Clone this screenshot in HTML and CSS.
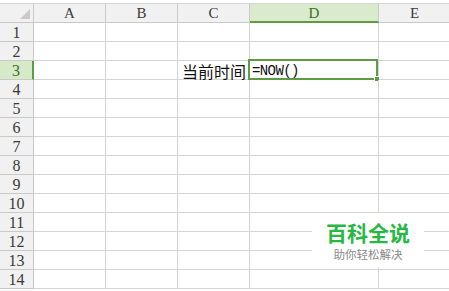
FILE: index.html
```html
<!DOCTYPE html>
<html>
<head>
<meta charset="utf-8">
<link rel="stylesheet" href="styles.css">
</head>
<body>
<div class="sheet">
  <div class="hd corner"><svg class="tri" width="12" height="11" viewBox="0 0 12 11"><polygon points="11,0 11,10 1,10" fill="#c9c9c9"/></svg></div>
  <div class="hd col">A</div>
  <div class="hd col">B</div>
  <div class="hd col">C</div>
  <div class="hd col active-col">D</div>
  <div class="hd col last">E</div>

  <div class="hd row">1</div><div class="c"></div><div class="c"></div><div class="c"></div><div class="c"></div><div class="c last"></div>
  <div class="hd row">2</div><div class="c"></div><div class="c"></div><div class="c"></div><div class="c"></div><div class="c last"></div>
  <div class="hd row active-row">3</div><div class="c"></div><div class="c"></div><div class="c label">当前时间</div><div class="c sel"><span class="formula">=NOW()</span><span class="frame"><span class="handle"></span></span></div><div class="c last"></div>
  <div class="hd row">4</div><div class="c"></div><div class="c"></div><div class="c"></div><div class="c"></div><div class="c last"></div>
  <div class="hd row">5</div><div class="c"></div><div class="c"></div><div class="c"></div><div class="c"></div><div class="c last"></div>
  <div class="hd row">6</div><div class="c"></div><div class="c"></div><div class="c"></div><div class="c"></div><div class="c last"></div>
  <div class="hd row">7</div><div class="c"></div><div class="c"></div><div class="c"></div><div class="c"></div><div class="c last"></div>
  <div class="hd row">8</div><div class="c"></div><div class="c"></div><div class="c"></div><div class="c"></div><div class="c last"></div>
  <div class="hd row">9</div><div class="c"></div><div class="c"></div><div class="c"></div><div class="c"></div><div class="c last"></div>
  <div class="hd row">10</div><div class="c"></div><div class="c"></div><div class="c"></div><div class="c"></div><div class="c last"></div>
  <div class="hd row">11</div><div class="c"></div><div class="c"></div><div class="c"></div><div class="c"></div><div class="c last"></div>
  <div class="hd row">12</div><div class="c"></div><div class="c"></div><div class="c"></div><div class="c"></div><div class="c last"></div>
  <div class="hd row">13</div><div class="c"></div><div class="c"></div><div class="c"></div><div class="c"></div><div class="c last"></div>
  <div class="hd row">14</div><div class="c"></div><div class="c"></div><div class="c"></div><div class="c"></div><div class="c last"></div>
</div>
<div class="watermark">
  <div class="wm-title">百科全说</div>
  <div class="wm-sub">助你轻松解决</div>
</div>
</body>
</html>
```

FILE: styles.css
```css
html, body {
  margin: 0;
  padding: 0;
  background: #ffffff;
  overflow: hidden;
  width: 449px;
  height: 291px;
}

.sheet {
  margin-top: 3px;
  border-top: 1px solid #d6d6d6;
  display: grid;
  grid-template-columns: 34px 72px 72px 72px 129px 72px;
  grid-auto-rows: 19px;
  font-family: "Liberation Serif", "DejaVu Serif", serif;
}

.hd {
  box-sizing: border-box;
  background: #f1f1f1;
  color: #3a3a3a;
  border-right: 1px solid #c9c9c9;
  border-bottom: 1px solid #c9c9c9;
  display: flex;
  align-items: center;
  justify-content: center;
  font-size: 15px;
}

.corner {
  position: relative;
  justify-content: flex-end;
  align-items: flex-end;
  padding: 0 2px 2px 0;
}

.col {
  padding-top: 1px;
}

.row {
  font-size: 16px;
  padding-top: 1px;
}

.active-col {
  background: #d9ebcc;
  border-bottom: 2px solid #5d9b45;
  color: #3d6e2a;
}

.active-row {
  background: #d6e9c9;
  border-right: 2px solid #5d9b45;
  color: #3d6e2a;
}

.c {
  box-sizing: border-box;
  border-right: 1px solid #d4d4d4;
  border-bottom: 1px solid #d4d4d4;
  position: relative;
  display: flex;
  align-items: center;
}

.label {
  justify-content: flex-end;
  padding-right: 3px;
  font-family: "Noto Sans CJK SC", sans-serif;
  font-size: 16px;
  color: #111;
  padding-top: 1px;
}

.sel {
  padding-left: 2px;
}

.formula {
  font-family: "Liberation Mono", monospace;
  font-size: 14px;
  letter-spacing: -0.6px;
  color: #111;
  padding-top: 1px;
}

.frame {
  position: absolute;
  top: -2px;
  left: -2px;
  right: 0;
  bottom: -1px;
  border: 2px solid #5d9b45;
}

.handle {
  position: absolute;
  right: -4px;
  bottom: -4px;
  width: 4px;
  height: 4px;
  background: #5d9b45;
  border: 1px solid #ffffff;
}

.watermark {
  position: absolute;
  left: 312px;
  top: 213px;
  width: 112px;
  height: 54px;
  background: #ffffff;
  display: flex;
  flex-direction: column;
  align-items: center;
  font-family: "Noto Sans CJK SC", sans-serif;
}

.wm-title {
  margin-top: 8px;
  font-size: 21px;
  line-height: 23px;
  font-weight: 700;
  color: #27b844;
}

.wm-sub {
  margin-top: 3px;
  font-size: 11.5px;
  line-height: 14px;
  color: #8a8a8a;
}
```
